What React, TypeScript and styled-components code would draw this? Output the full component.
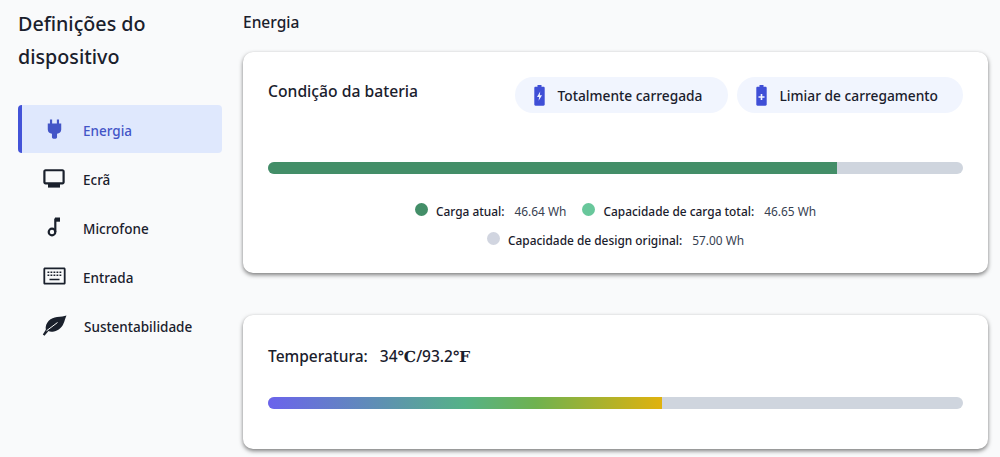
import styled, { createGlobalStyle } from 'styled-components';

const GlobalStyle = createGlobalStyle`
  html, body {
    margin: 0;
    padding: 0;
    background: #f9fafb;
    font-family: "Noto Sans", "Open Sans", sans-serif;
    color: #111827;
    overflow: hidden;
  }
`;

const PlugIcon = () => (
  <svg width="15" height="20" viewBox="0 0 16 22" fill="currentColor">
    <path d="M3 .5h2.400V5h5.200V.5H13V5h2.400v6.500c0 2.600-2 4.400-4.600 4.800V20c0 1-.8 1.600-1.600 1.600H6.800c-.8 0-1.600-.6-1.600-1.600v-3.700C2.600 15.900.6 14.100.6 11.500V5H3z" />
  </svg>
);

const MonitorIcon = () => (
  <svg width="22" height="19" viewBox="0 0 22 19" fill="currentColor">
    <path d="M2.500.3h17c1.200 0 2.200 1 2.200 2.200v10.700c0 1.200-1 2.200-2.200 2.200h-17C1.300 15.400.3 14.400.3 13.200V2.500C.3 1.300 1.300.3 2.500.3zm0 2v11h17v-11z" fillRule="evenodd" />
    <path d="M5 15h12v3.600H5z" />
  </svg>
);

const NoteIcon = () => (
  <svg width="14" height="20" viewBox="0 0 14 20" fill="none" stroke="currentColor" strokeWidth="2.2">
    <circle cx="5" cy="15" r="3.3" />
    <path d="M8.300 15V1.500" />
    <path d="M8 .5h5v4.200H8z" fill="currentColor" stroke="none" />
  </svg>
);

const KeyboardIcon = () => (
  <svg width="23" height="18" viewBox="0 0 23 18" fill="currentColor">
    <path d="M2 .5h19c.9 0 1.600.7 1.600 1.600v13.800c0 .9-.7 1.600-1.600 1.600H2c-.9 0-1.600-.7-1.600-1.600V2.100C.4 1.200 1.100.5 2 .5zm.2 1.800v13.400h18.600V2.300z" fillRule="evenodd" />
    <path d="M4.500 4.500h1.800v1.600H4.500zm3 0h1.800v1.600H7.500zm3 0h1.800v1.600h-1.800zm3 0h1.800v1.600h-1.800zm3 0h1.800v1.600h-1.800zM4.500 7.500h1.800v1.600H4.500zm3 0h1.800v1.600H7.500zm3 0h1.800v1.600h-1.800zm3 0h1.800v1.600h-1.800zm3 0h1.800v1.600h-1.800zM6.500 11.800h10v1.500h-10z" />
  </svg>
);

const LeafIcon = () => (
  <svg width="25" height="21" viewBox="0 0 25 21" fill="currentColor">
    <path d="M24.500.5C22 5 22.500 14 12 16.500c-2.500.5-4.500.3-5.500-.5l-4 4.700-1.700-1.100 3-4.800C2.800 7.500 9 2.500 15 2c4-.3 7-.5 9.500-1.500z" />
    <path d="M4.500 15.800 15.500 7.500" fill="none" stroke="#f9fafb" strokeWidth="1" />
  </svg>
);

const BatteryBoltIcon = () => (
  <svg width="11" height="21" viewBox="0 0 11 21" fill="currentColor">
    <path d="M3.500 0h4v1.800h2c.7 0 1.200.5 1.200 1.200v16.600c0 .7-.5 1.200-1.200 1.200h-8c-.7 0-1.200-.5-1.200-1.200V3c0-.7.5-1.200 1.200-1.200h2z" />
    <path d="M6.200 6.500 3 12h2.100l-.5 3.800L8 10.300H5.800z" fill="#f1f5fe" />
  </svg>
);

const BatteryPlusIcon = () => (
  <svg width="11" height="21" viewBox="0 0 11 21" fill="currentColor">
    <path d="M3.500 0h4v1.800h2c.7 0 1.200.5 1.200 1.200v16.600c0 .7-.5 1.200-1.200 1.200h-8c-.7 0-1.200-.5-1.200-1.200V3c0-.7.5-1.200 1.200-1.200h2z" />
    <path d="M4.700 9h1.600v2.200h2.200v1.500H6.300v2.200H4.700v-2.200H2.500v-1.500h2.200z" fill="#f1f5fe" />
  </svg>
);

const navItems = [
  { label: 'Energia', icon: <PlugIcon />, active: true },
  { label: 'Ecrã', icon: <MonitorIcon />, active: false },
  { label: 'Microfone', icon: <NoteIcon />, active: false },
  { label: 'Entrada', icon: <KeyboardIcon />, active: false },
  { label: 'Sustentabilidade', icon: <LeafIcon />, active: false },
];

export default function App() {
  return (
    <Page>
      <GlobalStyle />
      <Sidebar>
        <SidebarTitle>Definições do dispositivo</SidebarTitle>
        <Nav>
          {navItems.map((item) => (
            <NavItem key={item.label} $active={item.active}>
              <NavIcon>{item.icon}</NavIcon>
              <NavLabel>{item.label}</NavLabel>
            </NavItem>
          ))}
        </Nav>
      </Sidebar>

      <Main>
        <Heading>Energia</Heading>

        <BatteryCard>
          <CardHeader>
            <CardTitle>Condição da bateria</CardTitle>
            <Pills>
              <Pill>
                <PillIcon><BatteryBoltIcon /></PillIcon>
                Totalmente carregada
              </Pill>
              <Pill>
                <PillIcon><BatteryPlusIcon /></PillIcon>
                Limiar de carregamento
              </Pill>
            </Pills>
          </CardHeader>

          <Track>
            <ChargeFill />
          </Track>

          <Legend>
            <LegendRow>
              <LegendItem>
                <Dot $color="#438e68" />
                <LegendLabel>Carga atual:</LegendLabel>
                <LegendValue>46.64 Wh</LegendValue>
              </LegendItem>
              <LegendItem>
                <Dot $color="#68c79b" />
                <LegendLabel>Capacidade de carga total:</LegendLabel>
                <LegendValue>46.65 Wh</LegendValue>
              </LegendItem>
            </LegendRow>
            <LegendRow>
              <LegendItem>
                <Dot $color="#d1d5e0" />
                <LegendLabel>Capacidade de design original:</LegendLabel>
                <LegendValue>57.00 Wh</LegendValue>
              </LegendItem>
            </LegendRow>
          </Legend>
        </BatteryCard>

        <TemperatureCard>
          <TemperatureTitle>
            Temperatura:
            <TemperatureValue>
              34<TemperatureUnit>℃</TemperatureUnit>/93.2<TemperatureUnit>℉</TemperatureUnit>
            </TemperatureValue>
          </TemperatureTitle>
          <Track>
            <TemperatureFill />
          </Track>
        </TemperatureCard>
      </Main>
    </Page>
  );
}

const Page = styled.div`
  display: flex;
  width: 1000px;
  height: 457px;
  overflow: hidden;
`;

const Sidebar = styled.aside`
  flex: 0 0 243px;
  box-sizing: border-box;
  padding: 7px 21px 0 18px;
`;

const SidebarTitle = styled.h1`
  margin: 0;
  font-size: 19.7px;
  font-weight: 500;
  line-height: 33px;
  color: #1a202c;
`;

const Nav = styled.nav`
  display: flex;
  flex-direction: column;
  gap: 1px;
  margin-top: 32px;
`;

const NavItem = styled.div<{ $active: boolean }>`
  display: flex;
  align-items: center;
  box-sizing: border-box;
  height: 48px;
  border-radius: 4px;
  border-left: 4px solid ${(p) => (p.$active ? '#4353d8' : 'transparent')};
  background: ${(p) => (p.$active ? '#dfe8fd' : 'transparent')};
  color: ${(p) => (p.$active ? '#4355c7' : '#1a202c')};
`;

const NavIcon = styled.span`
  display: flex;
  align-items: center;
  justify-content: center;
  flex: 0 0 24px;
  margin: 0 17px 0 20px;
`;

const NavLabel = styled.span`
  padding-top: 3px;
  font-size: 13.5px;
  font-weight: 500;
`;

const Main = styled.main`
  flex: 0 0 745px;
  display: flex;
  flex-direction: column;
`;

const Heading = styled.h2`
  margin: 0;
  height: 52px;
  box-sizing: border-box;
  padding-top: 12px;
  font-size: 15.5px;
  font-weight: 500;
  line-height: 21px;
  color: #1a202c;
`;

const Card = styled.section`
  box-sizing: border-box;
  background: #fff;
  border-radius: 10px;
  box-shadow: 0 2px 4px rgba(0, 0, 0, 0.5), 0 0 1px rgba(0, 0, 0, 0.08);
  padding: 0 25px;
`;

const BatteryCard = styled(Card)`
  height: 221px;
  padding-top: 25px;
`;

const TemperatureCard = styled(Card)`
  height: 134px;
  margin-top: 42px;
  padding-top: 30px;
`;

const CardHeader = styled.div`
  display: flex;
  justify-content: space-between;
  height: 85px;
`;

const CardTitle = styled.h3`
  margin: 0;
  font-size: 15.7px;
  font-weight: 500;
  line-height: 29px;
  color: #1a202c;
`;

const Pills = styled.div`
  display: flex;
  gap: 9px;
`;

const Pill = styled.div`
  display: flex;
  align-items: center;
  box-sizing: border-box;
  height: 36px;
  padding: 0 25px 0 19px;
  border-radius: 18px;
  background: #f1f5fe;
  font-size: 13.75px;
  font-weight: 500;
  color: #1a202c;
`;

const PillIcon = styled.span`
  display: flex;
  margin-right: 13px;
  color: #3f4fd6;
`;

const Track = styled.div`
  height: 12px;
  border-radius: 6px;
  background: #cfd5de;
  overflow: hidden;
`;

const ChargeFill = styled.div`
  width: 569px;
  height: 100%;
  background: #438e68;
`;

const TemperatureFill = styled.div`
  width: 394px;
  height: 100%;
  background: linear-gradient(90deg, #6b63ec 0%, #55b287 50%, #6fb24f 68%, #e0b20e 100%);
`;

const Legend = styled.div`
  display: flex;
  flex-direction: column;
  gap: 11px;
  margin-top: 28px;
`;

const LegendRow = styled.div`
  display: flex;
  justify-content: center;
  gap: 16px;
  height: 18px;
`;

const LegendItem = styled.div`
  display: flex;
  align-items: center;
  font-size: 11.9px;
  line-height: 18px;
`;

const Dot = styled.span<{ $color: string }>`
  width: 13px;
  height: 13px;
  border-radius: 50%;
  margin-right: 8px;
  margin-top: -3px;
  background: ${(p) => p.$color};
`;

const LegendLabel = styled.span`
  font-weight: 500;
  color: #1a202c;
`;

const LegendValue = styled.span`
  margin-left: 10px;
  color: #374151;
`;

const TemperatureTitle = styled.h3`
  margin: 0 0 29px;
  font-size: 15.5px;
  font-weight: 500;
  line-height: 22px;
  color: #1a202c;
`;

const TemperatureValue = styled.span`
  margin-left: 12px;
`;

const TemperatureUnit = styled.span`
  font-family: "DejaVu Serif", serif;
  font-weight: 700;
  font-size: 15.5px;
`;
